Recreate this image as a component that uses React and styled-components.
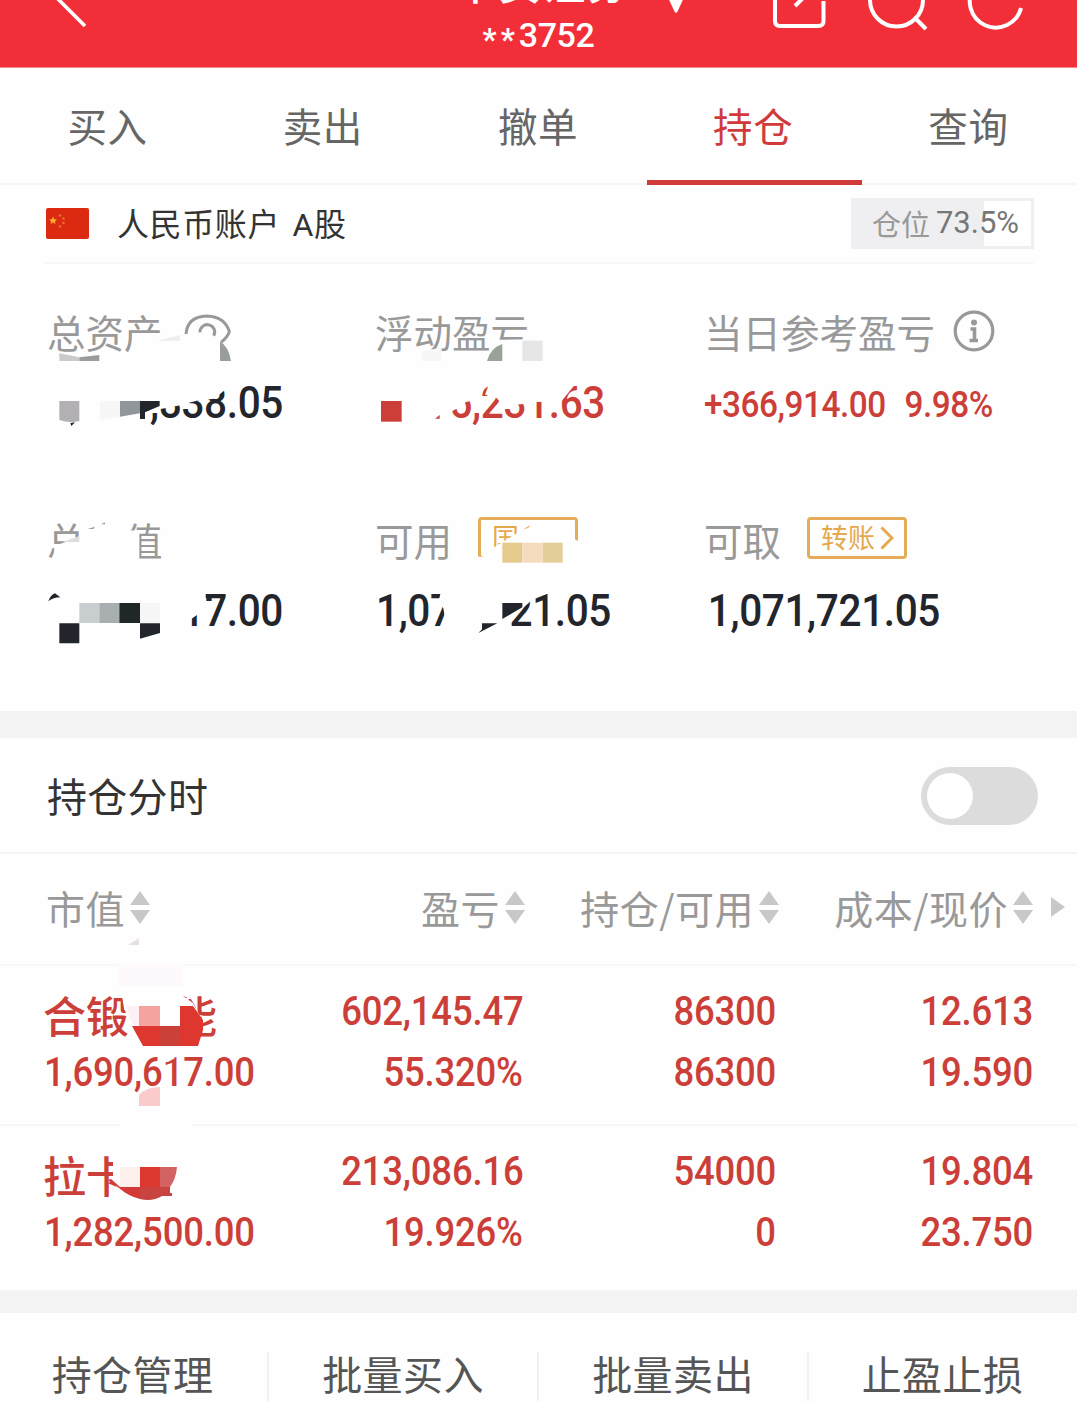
import styled, { createGlobalStyle } from 'styled-components';

const tabs = ['买入', '卖出', '撤单', '持仓', '查询'];

const actions = ['持仓管理', '批量买入', '批量卖出', '止盈止损'];

const holdings = [
  {
    name: ['合锻', '能'],
    cells: [
      ['602,145.47', '55.320%'],
      ['86300', '86300'],
      ['12.613', '19.590'],
    ],
    value: '1,690,617.00',
    cover: <FirstCover />,
  },
  {
    name: ['拉卡'],
    cells: [
      ['213,086.16', '19.926%'],
      ['54000', '0'],
      ['19.804', '23.750'],
    ],
    value: '1,282,500.00',
    cover: <SecondCover />,
  },
];

export default function App() {
  return (
    <Page>
      <GlobalStyle />
      <TopBar />
      <Tabs>
        {tabs.map((tab) => (
          <Tab key={tab} $active={tab === '持仓'}>{tab}</Tab>
        ))}
      </Tabs>
      <Account>
        <Flag />
        <AccountName>人民币账户 A股</AccountName>
        <Position $percent={73.5}>
          <span>仓位</span>
          <b>73.5%</b>
        </Position>
      </Account>
      <Summary />
      <Band $height={27} />
      <SwitchRow>
        <SwitchLabel>持仓分时</SwitchLabel>
        <Switch><Knob /></Switch>
      </SwitchRow>
      <TableHead>
        <HeadCell $left>市值<Sort /></HeadCell>
        <HeadCell>盈亏<Sort /></HeadCell>
        <HeadCell>持仓/可用<Sort /></HeadCell>
        <HeadCell>成本/现价<Sort /></HeadCell>
        <More viewBox="0 0 14 20"><path d="M0 0L14 10L0 20Z" fill="#c8c8c8" /></More>
      </TableHead>
      {holdings.map((item) => (
        <Holding key={item.value}>
          <HoldingCell $left>
            <Name>{item.name.map((part) => <span key={part}>{part}</span>)}</Name>
            <Figure $left>{item.value}</Figure>
          </HoldingCell>
          {item.cells.map(([top, bottom], i) => (
            <HoldingCell key={i}>
              <Figure>{top}</Figure>
              <Figure>{bottom}</Figure>
            </HoldingCell>
          ))}
          {item.cover}
        </Holding>
      ))}
      <Band $height={23} />
      <Actions>
        {actions.map((action) => <Action key={action}>{action}</Action>)}
      </Actions>
    </Page>
  );
}

function TopBar() {
  return (
    <Header>
      <HeaderSide>
        <svg width="60" height="67" viewBox="40 0 60 67">
          <path d="M85 26L59 0L85 -26" fill="none" stroke="#fff" strokeWidth="3.6" />
        </svg>
      </HeaderSide>
      <HeaderCenter>
        <Title>
          平安证券
          <svg width="24" height="44" viewBox="0 0 24 44">
            <path d="M1 20H23L13.5 40.5Q12 43 10.500 40.500Z" fill="#fff" />
          </svg>
        </Title>
        <Number><Stars>**</Stars>3752</Number>
      </HeaderCenter>
      <HeaderSide $right>
        <svg width="317" height="67" viewBox="760 0 317 67">
          <g fill="none" stroke="#fff" strokeWidth="4">
            <path d="M775 -20V21Q775 26 780 26H818Q823.500 26 823.500 21V1" />
            <path d="M795 6L812 -11" />
            <circle cx="896.500" cy="0" r="26.500" />
            <path d="M914 17L926 29" />
            <path d="M1021 8A26 26 0 1 1 1014 -17" />
          </g>
        </svg>
      </HeaderSide>
    </Header>
  );
}

function Flag() {
  return (
    <FlagIcon viewBox="0 0 43 31">
      <rect width="43" height="31" rx="2" fill="#dc2a12" />
      <path d="M7 8.500L8.200 11.300L11 11.500L8.900 13.400L9.600 16L7 14.600L4.500 16L5.200 13.400L3.200 11.500L5.900 11.300Z" fill="#fbb02c" />
      <g fill="#e8702a">
        <circle cx="14" cy="7.500" r="1.300" />
        <circle cx="17.500" cy="10.500" r="1.300" />
        <circle cx="17.500" cy="15" r="1.300" />
        <circle cx="14" cy="18.500" r="1.300" />
      </g>
    </FlagIcon>
  );
}

function Sort() {
  return (
    <SortIcon viewBox="0 0 20 33">
      <path d="M10 0L20 14H0ZM0 19H20L10 33Z" fill="#c8c8c8" />
    </SortIcon>
  );
}

function Summary() {
  return (
    <Stats>
      <Stat>
        <Label>总资产</Label>
        <Value $right>,838.05</Value>
        <Cover $left={-18} $top={36} width="330" height="140" viewBox="0 0 990 420">
          <path d="M468 102Q472 50 530 48Q585 50 598 95Q592 112 574 126M510 97A22 22 0 1 1 551 107" fill="none" stroke="#999" strokeWidth="9" />
          <path d="M320 145L385 122H460V183H320Z" fill="#fefefe" />
          <path d="M383 122L450 105V122Z" fill="#eee" />
          <path d="M88 160L148 172V183H88Z" fill="#cacaca" />
          <path d="M148 172L208 165V183H148Z" fill="#9a9c9a" />
          <path d="M570 124Q596 140 603 183H570Z" fill="#9a9e9a" />
          <path d="M330 245H590L582 272L552 296L500 302L440 318L388 328L350 342L330 345Z" fill="#fefefe" />
          <path d="M88 303H148V363Q115 370 88 360Z" fill="#b3b0b4" />
          <path d="M121 369L135 367L124 378Z" fill="#22262c" />
          <path d="M210 303H270V350L210 361Z" fill="#f7f7f7" />
          <path d="M270 303H330V340L270 350Z" fill="#90979a" />
          <path d="M330 303H389V318L345 337V357H330Z" fill="#22262c" />
        </Cover>
      </Stat>
      <Stat>
        <Label>浮动盈亏</Label>
        <Value $red $right>5,231.63</Value>
        <Cover $left={-16} $top={36} width="330" height="140" viewBox="0 0 990 420">
          <path d="M388 120L510 118V183H388Z" fill="#fefefe" />
          <path d="M185 155L245 142V183H185Z" fill="#f7f7f7" />
          <path d="M427 132V183H381Q390 145 427 132Z" fill="#9aa29a" />
          <path d="M487 122H548V183H487Z" fill="#e6e6e6" />
          <path d="M250 245H362L345 300L318 306L300 320L268 338H250Z" fill="#fefefe" />
          <path d="M388 250H648L605 303L530 306L490 312L430 318L412 296L398 286L375 284Z" fill="#fefefe" />
          <path d="M63 303H125V365H63Z" fill="#cc3f39" />
          <path d="M225 356L239 345V356Z" fill="#cc3f39" />
        </Cover>
      </Stat>
      <Stat>
        <Label>
          当日参考盈亏
          <svg width="42" height="42" viewBox="0 0 42 42">
            <circle cx="21" cy="21" r="18.800" fill="none" stroke="#999" strokeWidth="3.200" />
            <circle cx="21" cy="12.500" r="3" fill="#999" />
            <path d="M17.500 19H21.500V30.500M16.500 30.500H25" fill="none" stroke="#999" strokeWidth="3.600" />
          </svg>
        </Label>
        <DayProfit><span>+366,914.00</span><span>9.98%</span></DayProfit>
      </Stat>
      <Stat>
        <Label>总市值</Label>
        <Value $right>17.00</Value>
        <Cover $left={-18} $top={28} width="330" height="160" viewBox="0 0 990 480">
          <path d="M68 195L74 137L100 128L148 112L150 55H301L300 92L328 90V195Z" fill="#fefefe" />
          <path d="M98 126L148 108V126Z" fill="#ddd" />
          <path d="M173 87L195 80L190 87ZM213 73L225 67V73Z" fill="#999" />
          <path d="M440 265H526V310L505 342L488 354L440 385Z" fill="#fefefe" />
          <path d="M529 285H545V303H529Z" fill="#22262c" />
          <path d="M55 304Q62 284 75 280L91 292Q70 292 55 304Z" fill="#22262c" />
          <path d="M148 309H208V369H148Z" fill="#c9ced1" />
          <path d="M208 309H268V369H208Z" fill="#a9aeb1" />
          <path d="M268 309H330V369H268Z" fill="#202727" />
          <path d="M330 309H390V369H330Z" fill="#f6f6f6" />
          <path d="M88 370H148V430H88ZM330 370H390V399L330 416Z" fill="#22262c" />
        </Cover>
      </Stat>
      <Stat>
        <Label>可用<Tag>国</Tag></Label>
        <SplitValue><Value>1,07</Value><Value $right>21.05</Value></SplitValue>
        <Cover $left={-16} $top={28} width="330" height="160" viewBox="0 0 990 480">
          <path d="M345 170H367L372 160L400 143L470 100L520 76L636 72V113L653 122L665 190H345Z" fill="#fefefe" />
          <path d="M490 88L510 76L505 84Z" fill="#e5ad5a" />
          <path d="M427 128H487V188H427Z" fill="#e4cb8d" />
          <path d="M487 128H548V188H487Z" fill="#f5dcbe" />
          <path d="M548 128H608V188H548Z" fill="#e4ce99" />
          <path d="M244 270H280V360H256L250 325L236 303Z" fill="#fefefe" />
          <path d="M430 270H515V301L460 350L440 355Z" fill="#fefefe" />
          <path d="M427 309H487V322L427 357ZM366 370H412L355 399L366 388Z" fill="#22262c" />
        </Cover>
      </Stat>
      <Stat>
        <Label>
          可取
          <Tag>
            转账
            <svg width="14" height="24" viewBox="0 0 14 24">
              <path d="M1.500 1.500L12 12L1.500 22.500" fill="none" stroke="#e5a84d" strokeWidth="3" />
            </svg>
          </Tag>
        </Label>
        <Value $right>1,071,721.05</Value>
      </Stat>
    </Stats>
  );
}

function FirstCover() {
  return (
    <Cover $left={110} $top={-31} width="120" height="180" viewBox="110 935 120 180">
      <path d="M119 960H183V996L193 1003L203 1022L198 1047H143L131 1026L124 1008L121 990Z" fill="#fefefe" />
      <path d="M119 965H183V986H119Z" fill="#fdf9fd" />
      <path d="M128 945L139 938V945Z" fill="#e6e0e6" />
      <path d="M126 1006H139V1026H133Z" fill="#fff0f3" />
      <path d="M139 1006H160V1026H139Z" fill="#f5a39f" />
      <path d="M180 1006H193L203 1020V1030L198 1046H143L132 1026H180Z" fill="#dd3730" />
      <path d="M160 1026H180V1046H160Z" fill="#cb4039" />
      <path d="M160 1058H175L168 1062H160Z" fill="#fefefe" />
      <path d="M139 1106V1095Q146 1087 160 1087V1106Z" fill="#fbcaca" />
    </Cover>
  );
}

function SecondCover() {
  return (
    <Cover $left={104} $top={-10} width="100" height="100" viewBox="104 1116 100 100">
      <path d="M120 1116H192V1165H180V1202H140L119 1190L113 1182V1150H120Z" fill="#fefefe" />
      <path d="M120 1167H140V1187H120Z" fill="#feeeec" />
      <path d="M108 1180L111 1179L120 1187H140V1199Q128 1196 119 1188Z" fill="#d33a38" />
      <path d="M140 1167H160V1187H140Z" fill="#dc382f" />
      <path d="M160 1167H177Q176 1179 170 1187H160Z" fill="#d36363" />
      <path d="M140 1187H170V1193H172V1196H162Q152 1202 140 1199Z" fill="#c94441" />
    </Cover>
  );
}

const GlobalStyle = createGlobalStyle`
  body {
    margin: 0;
    background: #fefefe;
  }

  svg {
    display: block;
    flex: none;
  }
`;

const Page = styled.div`
  width: 1077px;
  height: 1403px;
  overflow: hidden;
  background: #fefefe;
  color: #333;
  font-family: 'Noto Sans CJK SC', sans-serif;
`;

const Header = styled.div`
  display: grid;
  grid-template-columns: 317px 1fr 317px;
  height: 68px;
  overflow: hidden;
  background: #f22f38;
  border-bottom: 1px solid #f78a8d;
  box-sizing: border-box;
`;

const HeaderSide = styled.div`
  display: flex;
  padding-left: ${({ $right }) => ($right ? 0 : '40px')};
`;

const HeaderCenter = styled.div`
  display: flex;
  flex-direction: column;
  align-items: center;
  color: #fff;
`;

const Title = styled.div`
  display: flex;
  align-items: center;
  gap: 34px;
  height: 60px;
  margin-top: -49px;
  padding-left: 64px;
  font-size: 44px;
  font-weight: 500;
  line-height: 60px;

  svg {
    margin-top: 24px;
  }
`;

const Number = styled.div`
  font-family: Roboto, sans-serif;
  font-size: 34px;
  font-weight: 500;
  line-height: 49px;
  letter-spacing: -0.4px;
`;

const Stars = styled.span`
  position: relative;
  top: 3px;
  font-size: 31px;
  font-weight: 700;
  letter-spacing: 4px;
`;

const Tabs = styled.div`
  display: grid;
  grid-template-columns: repeat(5, 1fr);
  height: 117px;
  padding-left: 1px;
  border-bottom: 2px solid #f5f5f5;
  box-sizing: border-box;
`;

const Tab = styled.div`
  height: 117px;
  padding-right: 2px;
  border-bottom: ${({ $active }) => ($active ? '5px solid #d03a3b' : 'none')};
  box-sizing: border-box;
  color: ${({ $active }) => ($active ? '#d03a3b' : '#666')};
  font-size: 39.500px;
  line-height: 114px;
  letter-spacing: 0.6px;
  text-align: center;
`;

const Account = styled.div`
  display: flex;
  align-items: center;
  height: 79px;
  margin: 0 43px 0 44px;
  border-bottom: 2px solid #f8f8f8;
  box-sizing: border-box;
`;

const FlagIcon = styled.svg`
  width: 43px;
  height: 31px;
  margin: 0 28px 0 2px;
`;

const AccountName = styled.div`
  flex: 1;
  padding-top: 3px;
  font-family: Roboto, 'Noto Sans CJK SC', sans-serif;
  font-size: 32px;
  line-height: 73px;
  letter-spacing: 0.6px;
  word-spacing: 4px;
`;

const Position = styled.div`
  display: flex;
  align-items: center;
  justify-content: center;
  gap: 6px;
  width: 183px;
  height: 51px;
  padding: 0 0 2px 6px;
  border: 3px solid #efeff2;
  box-sizing: border-box;
  background: linear-gradient(to right, #efeff2 ${({ $percent }) => $percent}%, #fff 0);
  color: #999;
  font-size: 29px;
  line-height: 40px;

  b {
    color: #777;
    font: 400 31px Roboto, sans-serif;
  }
`;

const Stats = styled.div`
  display: grid;
  grid-template-columns: 328px 329px 1fr;
  grid-template-rows: 208px 208px;
  height: 447px;
  padding-left: 48px;
  box-sizing: border-box;
`;

const Stat = styled.div`
  position: relative;
  padding-top: 42px;
`;

const Label = styled.div`
  display: flex;
  align-items: center;
  height: 50px;
  margin-left: -1px;
  color: #999;
  font-size: 38.500px;

  svg {
    margin-left: 18px;
  }
`;

const Value = styled.div`
  display: flex;
  justify-content: ${({ $right }) => ($right ? 'flex-end' : 'flex-start')};
  width: ${({ $red }) => ($red ? 229 : 235)}px;
  margin-top: 22px;
  color: ${({ $red }) => ($red ? '#cc3f39' : '#22262c')};
  font-family: Roboto, sans-serif;
  font-size: 45px;
  font-weight: 500;
  line-height: 50px;
  letter-spacing: -0.400px;
  white-space: nowrap;
  transform: scaleX(0.9);
  transform-origin: ${({ $right }) => ($right ? 'right' : 'left')};
`;

const SplitValue = styled.div`
  display: flex;
  justify-content: space-between;
  width: 235px;

  ${Value} {
    width: 117px;
  }
`;

const DayProfit = styled.div`
  display: flex;
  gap: 21px;
  margin: 23px 0 0 -1px;
  color: #cc3f39;
  font-family: Roboto, sans-serif;
  font-size: 37px;
  font-weight: 500;
  line-height: 51px;
  letter-spacing: -0.500px;
  transform: scaleX(0.9);
  transform-origin: left;
`;

const Tag = styled.div`
  display: flex;
  align-items: center;
  width: 100px;
  height: 42px;
  margin: -2px 0 0 26px;
  padding: 0 0 2px 11px;
  border: 3px solid #e5ad5a;
  border-radius: 4px;
  box-sizing: border-box;
  color: #e5a84d;
  font-size: 27px;
  line-height: 34px;

  svg {
    margin: 2px 0 0 5px;
  }
`;

/* sits over the figures it hides */
const Cover = styled.svg`
  position: absolute;
  left: ${({ $left }) => $left}px;
  top: ${({ $top }) => $top}px;
`;

const Band = styled.div`
  height: ${({ $height }) => $height}px;
  background: #f3f3f3;
`;

const SwitchRow = styled.div`
  display: flex;
  align-items: center;
  justify-content: space-between;
  height: 116px;
  padding: 1px 39px 0 47px;
  border-bottom: 2px solid #f4f4f4;
  box-sizing: border-box;
`;

const SwitchLabel = styled.div`
  padding-bottom: 2px;
  font-size: 40px;
  letter-spacing: 0.3px;
`;

const Switch = styled.div`
  width: 117px;
  height: 58px;
  padding: 6px;
  border-radius: 29px;
  box-sizing: border-box;
  background: #dcdcdc;
`;

const Knob = styled.div`
  width: 46px;
  height: 46px;
  border-radius: 50%;
  background: #fff;
`;

const TableHead = styled.div`
  display: grid;
  grid-template-columns: 225px 254px 254px 254px 1fr;
  align-items: center;
  height: 112px;
  padding: 0 0 4px 46px;
  border-bottom: 2px solid #f8f8f8;
  box-sizing: border-box;
`;

const HeadCell = styled.div`
  display: flex;
  align-items: center;
  justify-content: ${({ $left }) => ($left ? 'flex-start' : 'flex-end')};
  color: #999;
  font-size: 39px;
  letter-spacing: 0.5px;
`;

const SortIcon = styled.svg`
  width: 20px;
  height: 33px;
  margin-left: 5px;
`;

const More = styled.svg`
  width: 14px;
  height: 20px;
  margin-left: 18px;
`;

const Holding = styled.div`
  position: relative;
  display: grid;
  grid-template-columns: 225px 254px 253px 257px;
  height: 160px;
  padding: 15px 0 0 44px;
  border-bottom: 2px solid #f7f7f7;
  box-sizing: border-box;
  color: #cc3f39;

  &:nth-last-child(3) {
    height: 164px;
    border-bottom: none;
  }
`;

const HoldingCell = styled.div`
  display: flex;
  flex-direction: column;
  align-items: ${({ $left }) => ($left ? 'flex-start' : 'flex-end')};
`;

const Name = styled.div`
  display: flex;
  justify-content: space-between;
  width: 174px;
  height: 61px;
  margin-left: -1px;
  font-size: 43px;
  font-weight: 500;
  line-height: 67px;
`;

const Figure = styled.div`
  height: 61px;
  font-family: Roboto, sans-serif;
  font-size: 40.500px;
  font-weight: 500;
  line-height: 61px;
  letter-spacing: -0.200px;
  transform: scaleX(0.9);
  transform-origin: ${({ $left }) => ($left ? 'left' : 'right')};
`;

const Actions = styled.div`
  display: grid;
  grid-template-columns: 268px 270px 270px 1fr;
  height: 90px;
`;

const Action = styled.div`
  position: relative;
  padding-top: 33px;
  font-size: 40px;
  line-height: 54px;
  letter-spacing: 0.4px;
  text-align: center;
  color: #555;

  &:first-child {
    padding-right: 3px;
  }

  &:not(:last-child)::after {
    content: '';
    position: absolute;
    right: -1px;
    top: 39px;
    width: 2px;
    height: 49px;
    background: #f1f1f1;
  }
`;
